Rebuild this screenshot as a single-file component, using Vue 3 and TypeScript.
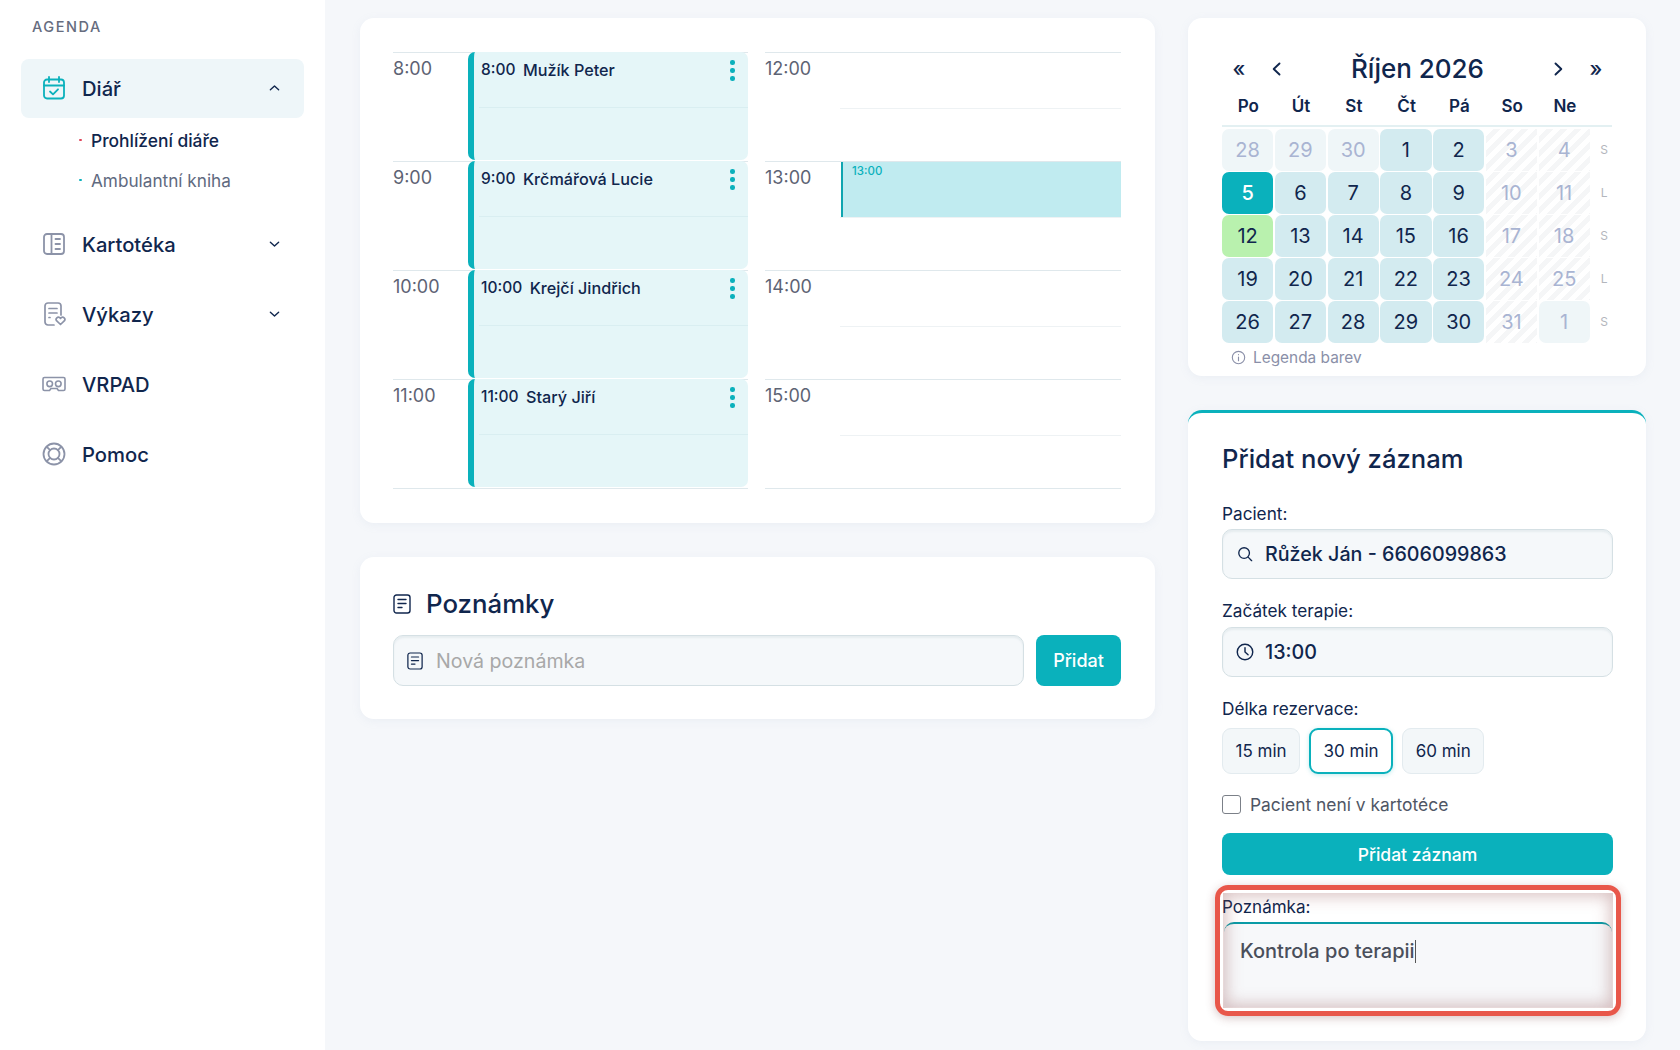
<script setup lang="ts">
interface Hour { label: string; time?: string; name?: string; picked?: boolean }
interface Day { n: number; kind: string }

const leftHours: Hour[] = [
  { label: '8:00', time: '8:00', name: 'Mužík Peter' },
  { label: '9:00', time: '9:00', name: 'Krčmářová Lucie' },
  { label: '10:00', time: '10:00', name: 'Krejčí Jindřich' },
  { label: '11:00', time: '11:00', name: 'Starý Jiří' },
]
const rightHours: Hour[] = [
  { label: '12:00' },
  { label: '13:00', picked: true },
  { label: '14:00' },
  { label: '15:00' },
]
const weekdays = ['Po', 'Út', 'St', 'Čt', 'Pá', 'So', 'Ne']
const shifts = ['S', 'L', 'S', 'L', 'S']

function rowOf(start: number, firstKinds: string[] = []): Day[] {
  return Array.from({ length: 7 }, (_, i) => ({
    n: start + i,
    kind: firstKinds[i] ?? (i >= 5 ? 'weekend' : 'open'),
  }))
}
const weeks: Day[][] = [
  [
    { n: 28, kind: 'faded' }, { n: 29, kind: 'faded' }, { n: 30, kind: 'faded' },
    { n: 1, kind: 'open' }, { n: 2, kind: 'open' }, { n: 3, kind: 'weekend' }, { n: 4, kind: 'weekend' },
  ],
  rowOf(5, ['today']),
  rowOf(12, ['green']),
  rowOf(19),
  [
    { n: 26, kind: 'open' }, { n: 27, kind: 'open' }, { n: 28, kind: 'open' }, { n: 29, kind: 'open' },
    { n: 30, kind: 'open' }, { n: 31, kind: 'weekend' }, { n: 1, kind: 'faded' },
  ],
]
const durations = ['15 min', '30 min', '60 min']
</script>

<template>
  <div class="app">
    <aside class="sidebar">
      <div class="brand">AGENDA</div>
      <nav class="nav">
        <div class="nav-item active">
          <svg class="nav-icon" viewBox="0 0 24 24" fill="none" stroke="#0ab1bc" stroke-width="1.8" stroke-linecap="round" stroke-linejoin="round">
            <rect x="2" y="3.5" width="20" height="19" rx="3" />
            <path d="M7 1v5M17 1v5M2 9.5h20M8 15.5l3 2.8 5-5" />
          </svg>
          <span class="nav-label">Diář</span>
          <svg class="chev" viewBox="0 0 12 8" fill="none" stroke="#10264d" stroke-width="1.5" stroke-linecap="round" stroke-linejoin="round"><path d="M1.5 6 6 1.8 10.5 6" /></svg>
        </div>
        <ul class="sub">
          <li class="sub-item current"><i class="dot red"></i>Prohlížení diáře</li>
          <li class="sub-item"><i class="dot"></i>Ambulantní kniha</li>
        </ul>
        <div class="nav-item">
          <svg class="nav-icon" viewBox="0 0 24 24" fill="none" stroke="#8c93a8" stroke-width="1.8" stroke-linecap="round" stroke-linejoin="round">
            <rect x="2" y="2" width="20" height="20" rx="3" />
            <path d="M9.5 2v20M13.5 7H18M13.5 12H18M13.5 17H18" />
          </svg>
          <span class="nav-label">Kartotéka</span>
          <svg class="chev" viewBox="0 0 12 8" fill="none" stroke="#10264d" stroke-width="1.5" stroke-linecap="round" stroke-linejoin="round"><path d="M1.5 2 6 6.2 10.5 2" /></svg>
        </div>
        <div class="nav-item">
          <svg class="nav-icon" viewBox="0 0 24 24" fill="none" stroke="#8c93a8" stroke-width="1.7" stroke-linecap="round" stroke-linejoin="round">
            <path d="M12 23H6a3 3 0 0 1-3-3V4a3 3 0 0 1 3-3h10a3 3 0 0 1 3 3v9" />
            <path d="M7 6.5h8M7 11h8M7 15.5h1" />
            <path d="M18.5 22.5l-4-3.8a2.3 2.3 0 0 1 3.3-3.1l.7.7.7-.7a2.3 2.3 0 0 1 3.3 3.1z" />
          </svg>
          <span class="nav-label">Výkazy</span>
          <svg class="chev" viewBox="0 0 12 8" fill="none" stroke="#10264d" stroke-width="1.5" stroke-linecap="round" stroke-linejoin="round"><path d="M1.5 2 6 6.2 10.5 2" /></svg>
        </div>
        <div class="nav-item">
          <svg class="nav-icon" viewBox="0 0 24 24" fill="none" stroke="#8c93a8" stroke-width="1.6" stroke-linecap="round" stroke-linejoin="round">
            <path d="M2.5 5.5h19A1.5 1.5 0 0 1 23 7v10a1.5 1.5 0 0 1-1.5 1.5h-5l-1.5-2H9l-1.5 2h-5A1.5 1.5 0 0 1 1 17V7a1.5 1.5 0 0 1 1.5-1.5z" />
            <circle cx="7.7" cy="11.8" r="2.8" />
            <circle cx="16.3" cy="11.8" r="2.8" />
          </svg>
          <span class="nav-label">VRPAD</span>
        </div>
        <div class="nav-item">
          <svg class="nav-icon" viewBox="0 0 24 24" fill="none" stroke="#8c93a8" stroke-width="1.8" stroke-linecap="round">
            <circle cx="12" cy="12" r="10.5" />
            <circle cx="12" cy="12" r="5.5" />
            <path d="M4.6 4.6l3.5 3.5M19.4 4.6l-3.5 3.5M4.6 19.4l3.5-3.5M19.4 19.4l-3.5-3.5" />
          </svg>
          <span class="nav-label">Pomoc</span>
        </div>
      </nav>
    </aside>

    <main class="main">
      <div class="col">
        <section class="card schedule">
          <div class="day-col">
            <div v-for="h in leftHours" :key="h.label" class="hour">
              <span class="hour-label">{{ h.label }}</span>
              <div class="event">
                <div class="event-top">
                  <span class="event-time">{{ h.time }}</span>
                  <span class="event-name">{{ h.name }}</span>
                  <span class="kebab"><i></i><i></i><i></i></span>
                </div>
              </div>
            </div>
          </div>
          <div class="day-col">
            <div v-for="h in rightHours" :key="h.label" class="hour">
              <span class="hour-label">{{ h.label }}</span>
              <div class="slot">
                <div v-if="h.picked" class="picked">{{ h.label }}</div>
              </div>
            </div>
          </div>
        </section>

        <section class="card notes">
          <h2 class="notes-title">
            <svg class="doc-lg" viewBox="0 0 18 20" fill="none" stroke="#10264d" stroke-width="1.4" stroke-linecap="round">
              <rect x="1" y="1" width="16" height="18" rx="2.5" />
              <path d="M5 5.5h8M5 9.5h8M5 13.5h4" />
            </svg>
            Poznámky
          </h2>
          <div class="notes-row">
            <div class="field notes-input">
              <svg class="doc-sm" viewBox="0 0 18 20" fill="none" stroke="#10264d" stroke-width="1.4" stroke-linecap="round">
                <rect x="1" y="1" width="16" height="18" rx="2.5" />
                <path d="M5 5.5h8M5 9.5h8M5 13.5h4" />
              </svg>
              <span class="placeholder">Nová poznámka</span>
            </div>
            <button class="btn notes-btn" type="button">Přidat</button>
          </div>
        </section>
      </div>

      <div class="col">
        <section class="card calendar">
          <header class="cal-head">
            <span class="cal-nav">«</span>
            <svg class="cal-arrow" viewBox="0 0 10 14" fill="none" stroke="#10264d" stroke-width="1.9" stroke-linecap="round" stroke-linejoin="round"><path d="M8 1.5 2.2 7 8 12.5" /></svg>
            <span class="cal-title">Říjen 2026</span>
            <svg class="cal-arrow" viewBox="0 0 10 14" fill="none" stroke="#10264d" stroke-width="1.9" stroke-linecap="round" stroke-linejoin="round"><path d="M2 1.5 7.8 7 2 12.5" /></svg>
            <span class="cal-nav">»</span>
          </header>
          <div class="cal-grid week-head">
            <span v-for="d in weekdays" :key="d" class="wd">{{ d }}</span>
            <span></span>
          </div>
          <div class="cal-body">
            <div v-for="(w, i) in weeks" :key="i" class="cal-grid">
              <span v-for="d in w" :key="d.n" class="cell" :class="d.kind">{{ d.n }}</span>
              <span class="shift">{{ shifts[i] }}</span>
            </div>
          </div>
          <div class="legend">
            <svg viewBox="0 0 16 16" fill="none" stroke="#8a8fa8" stroke-width="1.2" stroke-linecap="round"><circle cx="8" cy="8" r="6.6" /><path d="M8 7.4v4M8 4.8v.2" /></svg>
            Legenda barev
          </div>
        </section>

        <section class="card form">
          <h2 class="form-title">Přidat nový záznam</h2>
          <div class="label first">Pacient:</div>
          <div class="field">
            <svg class="ic-search" viewBox="0 0 18 18" fill="none" stroke="#10264d" stroke-width="1.5" stroke-linecap="round"><circle cx="8" cy="8" r="6" /><path d="m12.5 12.5 4 4" /></svg>
            <span class="value">Růžek Ján - 6606099863</span>
          </div>
          <div class="label">Začátek terapie:</div>
          <div class="field">
            <svg class="ic-clock" viewBox="0 0 20 20" fill="none" stroke="#10264d" stroke-width="1.6" stroke-linecap="round" stroke-linejoin="round"><circle cx="10" cy="10" r="8.6" /><path d="M10 5.2V10l3.4 3" /></svg>
            <span class="value">13:00</span>
          </div>
          <div class="label">Délka rezervace:</div>
          <div class="durations">
            <button v-for="d in durations" :key="d" type="button" class="dur" :class="{ on: d === '30 min' }">{{ d }}</button>
          </div>
          <label class="check"><span class="box"></span>Pacient není v kartotéce</label>
          <button class="btn submit" type="button">Přidat záznam</button>
          <div class="note-field">
            <div class="note-label">Poznámka:</div>
            <div class="note-area">Kontrola po terapii<i class="caret"></i></div>
            <div class="ring"><div class="ring-inner"></div></div>
          </div>
        </section>
      </div>
    </main>
  </div>
</template>

<style>
html, body { margin: 0; overflow: hidden; background: #f5f7fa; }
</style>

<style scoped>
.app {
  display: flex;
  height: 1050px;
  overflow: hidden;
  background: #f5f7fa;
  color: #10264d;
  font-family: Inter, "Noto Sans", sans-serif;
}
.sidebar {
  width: 325px;
  flex: none;
  box-sizing: border-box;
  background: #fff;
  padding: 18px 21px 0;
}
.brand {
  height: 18px;
  margin-left: 11px;
  font-size: 14.5px;
  line-height: 18px;
  letter-spacing: 1.55px;
  font-weight: 500;
  color: #666c7e;
}
.nav { margin-top: 23px; display: flex; flex-direction: column; }
.nav-item {
  height: 58px;
  margin-bottom: 12px;
  padding: 0 24px 0 21px;
  display: flex;
  align-items: center;
  border-radius: 8px;
}
.nav-item.active { background: #eef6f9; margin-bottom: 0; padding-bottom: 1px; }
.nav-icon { width: 24px; height: 24px; flex: none; }
.nav-label { margin-left: 16px; flex: 1; font-size: 20.2px; font-weight: 500; }
.chev { width: 11px; height: 8px; flex: none; }
.sub { list-style: none; margin: 2px 0 15px; padding: 0; }
.sub-item {
  height: 40px;
  display: flex;
  align-items: center;
  padding-left: 58px;
  font-size: 17.2px;
  font-weight: 400;
  color: #5f6a80;
}
.sub-item.current { color: #10264d; font-weight: 500; font-size: 17.4px; }
.dot { width: 2.5px; height: 2.5px; border-radius: 50%; background: #0ab1bc; margin-right: 9.5px; flex: none; }
.dot.red { background: #e0455a; }

.main {
  flex: 1;
  box-sizing: border-box;
  padding: 18px 34px 0 35px;
  display: grid;
  grid-template-columns: 795px 458px;
  column-gap: 33px;
  align-items: start;
}
.col { display: flex; flex-direction: column; gap: 34px; }
.card {
  background: #fff;
  border-radius: 14px;
  box-shadow: 0 2px 10px rgba(150, 170, 200, 0.1);
}
.schedule {
  box-sizing: border-box;
  height: 505px;
  padding: 34px 33px;
  display: grid;
  grid-template-columns: 355px 356px;
  column-gap: 17px;
}
.day-col { display: flex; flex-direction: column; border-bottom: 1px solid #dfe8ec; height: 437px; box-sizing: border-box; }
.hour {
  height: 109px;
  box-sizing: border-box;
  border-top: 1px solid #dfe8ec;
  display: flex;
}
.hour-label {
  width: 75px;
  flex: none;
  padding-top: 5px;
  font-size: 18px;
  line-height: 22px;
  color: #5d6374;
}
.event {
  flex: 1;
  height: 108px;
  margin-top: -1px;
  box-sizing: border-box;
  background: #e5f6f8;
  border-left: 6px solid #0ab1bc;
  border-radius: 7px;
}
.event-top {
  height: 56px;
  margin-left: 5px;
  box-sizing: border-box;
  padding: 8px 13px 0 2px;
  border-bottom: 1px solid #d9eef1;
  display: flex;
  align-items: flex-start;
  font-size: 15.5px;
  line-height: 20px;
  font-weight: 500;
}
.event-time { margin-right: 7.5px; }
.event-name { flex: 1; font-size: 16.2px; }
.kebab { display: flex; flex-direction: column; gap: 3.5px; width: 5px; }
.kebab i { width: 4.5px; height: 4.5px; border-radius: 50%; background: #0ab1bc; }
.slot { flex: 1; position: relative; height: 108px; }
.slot::before {
  content: "";
  display: block;
  height: 56px;
  border-bottom: 1px solid #eef2f4;
  box-sizing: border-box;
}
.picked {
  position: absolute;
  left: 1px;
  right: 0;
  top: 0;
  height: 55px;
  box-sizing: border-box;
  background: #c0ebf0;
  border-left: 2px solid #0fa5b0;
  padding: 2px 0 0 9px;
  font-size: 11.5px;
  line-height: 14px;
  font-weight: 500;
  color: #0ab1bc;
}
.notes { box-sizing: border-box; height: 162px; padding: 29px 34px 0 33px; }
.notes-title {
  margin: 0 0 14px;
  height: 35px;
  display: flex;
  align-items: center;
  font-size: 25.8px;
  font-weight: 500;
}
.doc-lg { width: 18px; height: 20px; margin-right: 15px; }
.notes-row { display: flex; gap: 12px; }
.field {
  height: 50px;
  box-sizing: border-box;
  display: flex;
  align-items: center;
  background: #f5f8fa;
  border: 1.5px solid #d5e0e4;
  border-radius: 10px;
  box-shadow: inset 0 2px 2px rgba(170, 190, 200, 0.2);
}
.notes-input { flex: 1; height: 51px; padding-left: 13px; }
.doc-sm { width: 16px; height: 20px; margin-right: 13px; }
.placeholder { font-size: 19.6px; color: #a8a8a8; }
.btn {
  border: 0;
  background: #0ab1bc;
  color: #fff;
  border-radius: 8px;
  font-family: inherit;
  font-weight: 500;
}
.notes-btn { width: 85px; height: 51px; font-size: 18px; }

.calendar { box-sizing: border-box; height: 358px; padding: 32px 34px 0; }
.cal-head { height: 37px; display: flex; align-items: center; padding: 0 9px 0 10px; }
.cal-nav { width: 14px; text-align: center; font-size: 21px; font-weight: 500; line-height: 30px; }
.cal-arrow { width: 11px; height: 14px; margin-left: 25px; flex: none; }
.cal-title { flex: 1; text-align: center; font-size: 26px; font-weight: 500; }
.cal-arrow + .cal-nav { margin-left: 25px; }
.cal-title + .cal-arrow { margin-left: 0; }
.cal-grid { display: grid; grid-template-columns: repeat(7, 52.75px) 1fr; }
.week-head { height: 38px; margin-top: 2px; box-sizing: border-box; padding-bottom: 2px; border-bottom: 2px solid #e3f0f2; align-items: center; }
.wd { text-align: center; font-size: 17px; font-weight: 600; }
.cal-body { margin-top: 2px; display: flex; flex-direction: column; gap: 1.5px; }
.cell {
  height: 41.5px;
  margin-right: 1.5px;
  display: flex;
  align-items: center;
  justify-content: center;
  border-radius: 7px;
  font-size: 20px;
  font-weight: 400;
  background: #d3ebf0;
  color: #10264d;
}
.cell.faded { background: #eff6f8; color: #a9b4d2; }
.cell.today { background: #0ab1bc; color: #fff; font-weight: 500; }
.cell.green { background: #b9f1ae; }
.cell.weekend {
  color: #a9b4d2;
  background: repeating-linear-gradient(135deg, #fff 0 5px, #f5f6f7 5px 10px);
  border-radius: 0;
}
.shift { display: flex; align-items: center; justify-content: center; padding-left: 5px; font-size: 12px; color: #b3b6bd; }
.legend {
  margin: 5px 0 0 9px;
  height: 20px;
  display: flex;
  align-items: center;
  gap: 7px;
  font-size: 15.4px;
  color: #8a8fa8;
}
.legend svg { width: 15px; height: 15px; }

.form {
  box-sizing: border-box;
  height: 631px;
  padding: 0 33px 0 34px;
  border-top: 3px solid #0ab1bc;
}
.form-title { margin: 26px 0 0; height: 40px; line-height: 40px; font-size: 25.6px; font-weight: 500; }
.label { height: 24px; margin-top: 20px; margin-bottom: 4px; font-size: 17.2px; line-height: 24px; }
.label.first { margin-top: 23px; margin-bottom: 3px; }
.field .value { font-size: 19.7px; font-weight: 500; }
.ic-search { width: 16px; height: 16px; margin: 0 12px 0 14px; }
.ic-clock { width: 18px; height: 18px; margin: 0 11px 0 13px; }
.durations { display: flex; gap: 9px; margin-top: 7px; }
.dur {
  height: 46px;
  padding: 0 12.5px;
  box-sizing: border-box;
  border: 1px solid #e3ebef;
  background: #f3f7f9;
  border-radius: 9px;
  font-family: inherit;
  font-size: 17px;
  color: #10264d;
}
.dur.on { background: #fff; border: 2px solid #0ab1bc; box-shadow: 0 1px 4px rgba(10, 177, 188, 0.25); }
.check {
  margin-top: 20px;
  height: 20px;
  display: flex;
  align-items: center;
  font-size: 17.4px;
  color: #4f5665;
}
.box { width: 17px; height: 17px; border: 1.5px solid #7b8088; border-radius: 3px; margin-right: 9px; flex: none; }
.submit { display: block; width: 100%; height: 42px; margin-top: 19px; font-size: 17.5px; }
.note-field { position: relative; margin-top: 19px; }
.note-label { height: 28px; font-size: 17px; line-height: 27px; }
.note-area {
  height: 85px;
  box-sizing: border-box;
  margin: 0 1px 0 2px;
  padding: 13px 16px 0;
  background: #f7f8fa;
  border-top: 2px solid #0a9ba6;
  border-radius: 10px 10px 4px 4px;
  font-size: 20px;
  line-height: 28px;
  font-weight: 500;
  color: #4a4f5a;
}
.caret { display: inline-block; width: 1px; height: 23px; background: #555; vertical-align: -5px; }
.ring {
  position: absolute;
  inset: -9px -8px -9px -7px;
  box-sizing: border-box;
  border: 5px solid #e8574a;
  border-radius: 13px;
  padding: 3px;
  pointer-events: none;
  box-shadow: 0 2px 10px rgba(120, 60, 60, 0.3);
}
.ring-inner { width: 100%; height: 100%; box-shadow: inset 0 0 16px 3px rgba(140, 70, 70, 0.34); }
</style>
